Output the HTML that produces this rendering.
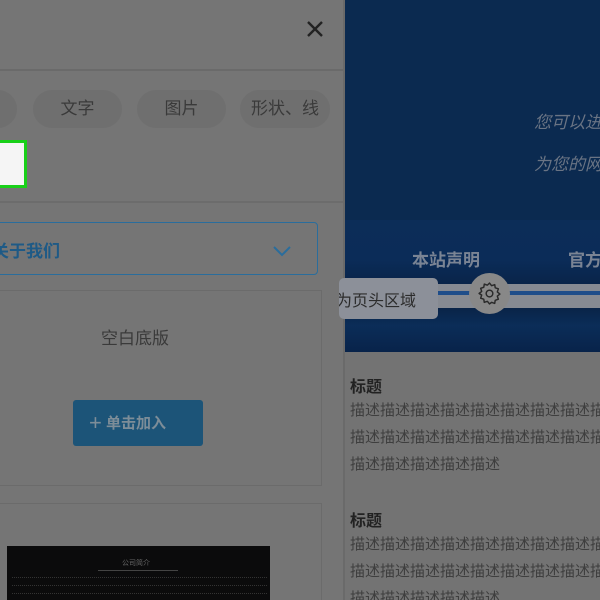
<!DOCTYPE html>
<html style="overflow:hidden;width:600px;height:600px"><head><meta charset="utf-8"><style>
*{margin:0;padding:0;box-sizing:border-box}
body{width:600px;height:600px;overflow:hidden;position:relative;background:#737373;font-family:"Liberation Sans","Noto Sans CJK SC",sans-serif}
.a{position:absolute;white-space:nowrap}
.pill{position:absolute;top:90px;height:38px;border-radius:19px;background:#6f6f6f;color:#3a3a3a;font-size:17px;text-align:center;line-height:38px}
.desc{font-size:15px;color:#3e3e3e;line-height:27px;white-space:nowrap}
.wrap{position:absolute;left:0;top:0;width:600px;height:600px;overflow:hidden}
</style></head><body><div class="wrap">
<div class="a" style="left:0;top:0;width:343px;height:600px;background:#757575"></div>
<div class="a" style="left:343px;top:0;width:2px;height:600px;background:#6a6a6a"></div>
<div class="a" style="left:0;top:69px;width:343px;height:2px;background:#6a6a6a"></div>
<svg class="a" style="left:306px;top:20px" width="18" height="18"><path d="M2 2L16 16M16 2L2 16" stroke="#222" stroke-width="2.4"/></svg>
<div class="pill" style="left:-70px;width:87px"></div>
<div class="pill" style="left:33px;width:89px">文字</div>
<div class="pill" style="left:137px;width:89px">图片</div>
<div class="pill" style="left:240px;width:90px">形状、线</div>
<div class="a" style="left:-4px;top:140px;width:31px;height:48px;border:3px solid #19d019;background:#f5f5f5"></div>
<div class="a" style="left:0;top:201px;width:343px;height:2px;background:#6c6c6c"></div>
<div class="a" style="left:-10px;top:222px;width:328px;height:53px;border:1.5px solid #2a6d9c;border-radius:4px"></div>
<div class="a" style="left:-8px;top:237px;font-size:17px;font-weight:bold;color:#1e5a86">关于我们</div>
<svg class="a" style="left:272px;top:245px" width="20" height="12"><path d="M2 2L10 10L18 2" stroke="#2a6d9c" stroke-width="2" fill="none"/></svg>
<div class="a" style="left:-10px;top:290px;width:332px;height:196px;border:1.5px solid #6b6b6b"></div>
<div class="a" style="left:101px;top:324px;font-size:17px;color:#3a3a3a">空白底版</div>
<div class="a" style="left:73px;top:400px;width:130px;height:46px;background:#1c5478;border-radius:3px;color:#7d8d98;font-size:15px;font-weight:bold;line-height:46px;padding-left:16px"><span style="font-size:22px;font-weight:normal;vertical-align:-2px">+</span> 单击加入</div>
<div class="a" style="left:-10px;top:503px;width:332px;height:120px;border:1.5px solid #6b6b6b"></div>
<div class="a" style="left:7px;top:546px;width:263px;height:60px;background:#0b0b0c"></div>
<div class="a" style="left:122px;top:558px;font-size:7px;color:#666">公司简介</div>
<div class="a" style="left:98px;top:570px;width:80px;height:1px;background:#444"></div>
<div class="a" style="left:12px;top:577px;width:255px;height:2px;border-top:1px dotted #333"></div>
<div class="a" style="left:12px;top:585px;width:255px;height:2px;border-top:1px dotted #333"></div>
<div class="a" style="left:12px;top:593px;width:255px;height:2px;border-top:1px dotted #333"></div>

<div class="a" style="left:345px;top:0;width:255px;height:220px;background:#0b2a50"></div>
<div class="a" style="left:534px;top:108px;font-size:17px;font-style:italic;color:#6a7484">您可以进</div>
<div class="a" style="left:534px;top:150px;font-size:17px;font-style:italic;color:#6a7484">为您的网</div>
<div class="a" style="left:345px;top:220px;width:255px;height:132px;background:linear-gradient(#0c2d58 0%,#0b2c58 30%,#081f40 60%,#0b2d58 80%,#08234a 100%)"></div>
<div class="a" style="left:412px;top:246px;font-size:17px;font-weight:bold;color:#7a8494">本站声明</div>
<div class="a" style="left:568px;top:246px;font-size:17px;font-weight:bold;color:#7a8494">官方</div>
<div class="a" style="left:345px;top:284px;width:255px;height:24px;background:#868a92"></div>
<div class="a" style="left:345px;top:291px;width:255px;height:4px;background:#1e4d8a"></div>
<div class="a" style="left:339px;top:278px;width:99px;height:41px;background:#8c9099;border-radius:5px;overflow:hidden"><div style="position:absolute;left:-3px;top:9px;font-size:16px;color:#2c2c2c;white-space:nowrap">为页头区域</div></div>
<div class="a" style="left:469px;top:273px;width:41px;height:41px;border-radius:50%;background:#888"></div>
<svg class="a" style="left:477px;top:281px" width="25" height="25" viewBox="0 0 24 24"><path d="M12 2l2 2.5 3-1 .5 3 3 1-1 3 2.5 2-2.5 2 1 3-3 1-.5 3-3-1L12 22l-2-2.5-3 1-.5-3-3-1 1-3L2 12l2.5-2-1-3 3-1 .5-3 3 1z" fill="none" stroke="#2a2a2a" stroke-width="1.4" stroke-linejoin="round"/><circle cx="12" cy="12" r="3.2" fill="none" stroke="#2a2a2a" stroke-width="1.4"/></svg>
<div class="a" style="left:345px;top:352px;width:255px;height:248px;background:#737373"></div>
<div class="a" style="left:350px;top:373px;font-size:16px;font-weight:bold;color:#222">标题</div>
<div class="a desc" style="left:350px;top:397px">描述描述描述描述描述描述描述描述描述<br>描述描述描述描述描述描述描述描述描述<br>描述描述描述描述描述</div>
<div class="a" style="left:350px;top:507px;font-size:16px;font-weight:bold;color:#222">标题</div>
<div class="a desc" style="left:350px;top:531px">描述描述描述描述描述描述描述描述描述<br>描述描述描述描述描述描述描述描述描述<br>描述描述描述描述描述</div>
</div></body></html>
